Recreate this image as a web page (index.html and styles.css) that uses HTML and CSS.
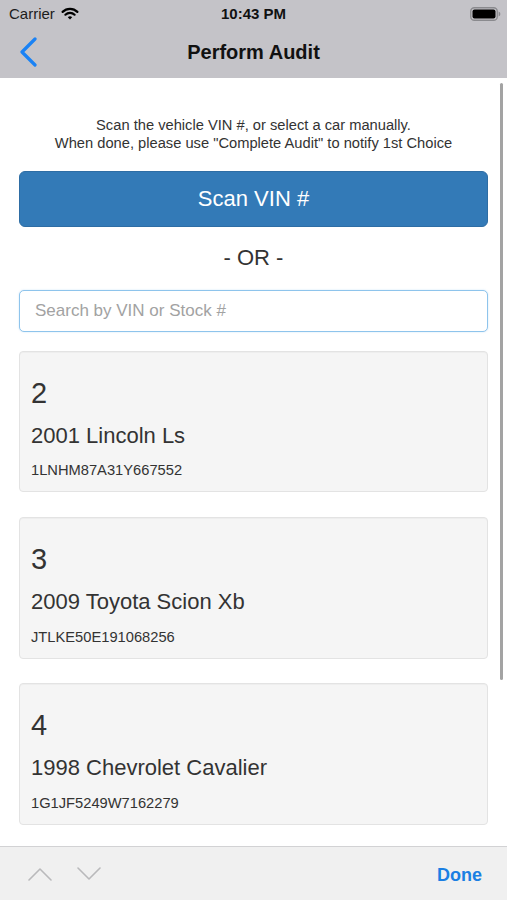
FILE: index.html
```html
<!DOCTYPE html>
<html lang="en">
<head>
<meta charset="utf-8">
<title>Perform Audit</title>
<link rel="stylesheet" href="styles.css">
</head>
<body>
<div class="phone">
  <header class="topbar">
    <div class="status">
      <div class="status-left">
        <span class="carrier">Carrier</span>
        <svg class="wifi" width="18" height="13" viewBox="0 0 18 13">
          <path d="M1.6 4.9 A10.5 10.5 0 0 1 16.4 4.9" fill="none" stroke="#000" stroke-width="2.2" stroke-linecap="round"/>
          <path d="M4.4 7.7 A6.6 6.6 0 0 1 13.6 7.7" fill="none" stroke="#000" stroke-width="2.2" stroke-linecap="round"/>
          <path d="M9 12.6 L6.8 10.3 A3.1 3.1 0 0 1 11.2 10.3 Z" fill="#000"/>
        </svg>
      </div>
      <div class="time">10:43 PM</div>
      <div class="status-right">
        <svg class="battery" width="31" height="14" viewBox="0 0 31 14">
          <rect x="0.75" y="0.75" width="26.5" height="12.5" rx="3.6" fill="none" stroke="#8a8a8e" stroke-width="1.3"/>
          <rect x="2.5" y="2.5" width="23" height="9" rx="2" fill="#000"/>
          <path d="M28.6 4.6 Q30.4 5.2 30.4 7 Q30.4 8.8 28.6 9.4 Z" fill="#8a8a8e"/>
        </svg>
      </div>
    </div>
    <nav class="navbar">
      <div class="nav-left">
        <svg class="back" width="18" height="30" viewBox="0 0 18 30">
          <polyline points="16,2 3,15 16,28" fill="none" stroke="#1a82f5" stroke-width="3.2" stroke-linecap="round" stroke-linejoin="round"/>
        </svg>
      </div>
      <div class="nav-title">Perform Audit</div>
      <div class="nav-right"></div>
    </nav>
  </header>

  <main class="content">
    <p class="intro">Scan the vehicle VIN #, or select a car manually.<br>When done, please use "Complete Audit" to notify 1st Choice</p>
    <button class="scan-btn" type="button">Scan VIN #</button>
    <div class="or">- OR -</div>
    <input class="search" type="text" placeholder="Search by VIN or Stock #">
    <div class="cards">
      <div class="card">
        <div class="num">2</div>
        <div class="title">2001 Lincoln Ls</div>
        <div class="vin">1LNHM87A31Y667552</div>
      </div>
      <div class="card">
        <div class="num">3</div>
        <div class="title">2009 Toyota Scion Xb</div>
        <div class="vin">JTLKE50E191068256</div>
      </div>
      <div class="card">
        <div class="num">4</div>
        <div class="title">1998 Chevrolet Cavalier</div>
        <div class="vin">1G1JF5249W7162279</div>
      </div>
    </div>
    <div class="scrollbar"></div>
  </main>

  <footer class="toolbar">
    <div class="arrows">
      <svg class="arrow" width="24" height="14" viewBox="0 0 24 14">
        <polyline points="1,13 12,2 23,13" fill="none" stroke="#b9b9bb" stroke-width="1.6" stroke-linecap="round" stroke-linejoin="round"/>
      </svg>
      <svg class="arrow" width="24" height="14" viewBox="0 0 24 14">
        <polyline points="1,1 12,12 23,1" fill="none" stroke="#b9b9bb" stroke-width="1.6" stroke-linecap="round" stroke-linejoin="round"/>
      </svg>
    </div>
    <div class="done">Done</div>
  </footer>
</div>
</body>
</html>
```

FILE: styles.css
```css
html, body {
  margin: 0;
  padding: 0;
  background: #fff;
}

body {
  font-family: "Liberation Sans", Arial, sans-serif;
  color: #333;
}

.phone {
  width: 507px;
  height: 900px;
  display: flex;
  flex-direction: column;
  overflow: hidden;
}

.topbar {
  background: #c4c3c8;
  height: 78px;
  display: flex;
  flex-direction: column;
  flex: none;
}

.status {
  height: 28px;
  display: grid;
  grid-template-columns: 1fr auto 1fr;
  align-items: center;
  color: #000;
}

.status-left {
  display: flex;
  align-items: center;
  gap: 6px;
  padding-left: 9px;
}

.carrier {
  font-size: 15px;
  line-height: 18px;
  color: #1c1c1c;
}

.wifi {
  display: block;
  margin-top: -1px;
}

.time {
  font-size: 15px;
  font-weight: 700;
  line-height: 18px;
  color: #111;
}

.status-right {
  display: flex;
  justify-content: flex-end;
  padding-right: 6px;
}

.battery {
  display: block;
}

.navbar {
  height: 50px;
  display: grid;
  grid-template-columns: 1fr auto 1fr;
  align-items: center;
}

.nav-left {
  padding-left: 19px;
  display: flex;
  align-items: center;
}

.back {
  display: block;
  margin-top: -2px;
}

.nav-title {
  font-size: 20px;
  font-weight: 700;
  color: #111;
  line-height: 24px;
  margin-top: -3px;
}

.content {
  flex: 1;
  position: relative;
  overflow: hidden;
  padding: 38px 19px 0 19px;
  display: flex;
  flex-direction: column;
}

.intro {
  margin: 0;
  text-align: center;
  font-size: 14.7px;
  line-height: 18.3px;
  color: #333;
}

.scan-btn {
  margin-top: 18.6px;
  height: 55.7px;
  width: 100%;
  background: #337ab7;
  border: 1px solid #2e6da4;
  border-radius: 6px;
  color: #fff;
  font-family: "Liberation Sans", Arial, sans-serif;
  font-size: 22px;
  display: flex;
  align-items: center;
  justify-content: center;
  padding: 0;
  flex: none;
}

.or {
  margin-top: 18.4px;
  text-align: center;
  font-size: 22px;
  line-height: 26px;
  color: #333;
}

.search {
  margin-top: 18.9px;
  box-sizing: border-box;
  width: 100%;
  height: 41.7px;
  border: 1px solid #8ec4ec;
  border-radius: 5px;
  padding: 0 15px;
  font-family: "Liberation Sans", Arial, sans-serif;
  font-size: 17px;
  color: #555;
  background: #fff;
  box-shadow: 0 0 2px rgba(102, 175, 233, 0.35);
  outline: none;
  flex: none;
}

.search::placeholder {
  color: #a2a2a2;
}

.cards {
  margin-top: 19px;
  display: flex;
  flex-direction: column;
  gap: 24.5px;
}

.card {
  background: #f5f5f5;
  border: 1px solid #e3e3e3;
  border-radius: 4px;
  padding: 25px 11px 12px 11px;
  box-shadow: inset 0 1px 1px rgba(0, 0, 0, 0.03);
}

.num {
  font-size: 29px;
  line-height: 32px;
  color: #333;
}

.title {
  margin-top: 14.4px;
  font-size: 22px;
  line-height: 26px;
  color: #333;
}

.vin {
  margin-top: 12.2px;
  font-size: 14.7px;
  line-height: 18px;
  color: #333;
}

.scrollbar {
  position: absolute;
  right: 4px;
  top: 5px;
  width: 3.5px;
  height: 597px;
  border-radius: 2px;
  background: #a3a3a3;
}

.toolbar {
  flex: none;
  height: 53px;
  border-top: 1px solid #d2d2d4;
  background: #f0f0f0;
  display: flex;
  align-items: center;
  justify-content: space-between;
  padding: 0 25px 0 28px;
}

.arrows {
  display: flex;
  align-items: center;
  gap: 25px;
  padding-top: 1px;
}

.arrow {
  display: block;
}

.done {
  font-size: 18px;
  font-weight: 700;
  color: #1b7fe3;
  line-height: 22px;
  margin-top: 2px;
}
```
